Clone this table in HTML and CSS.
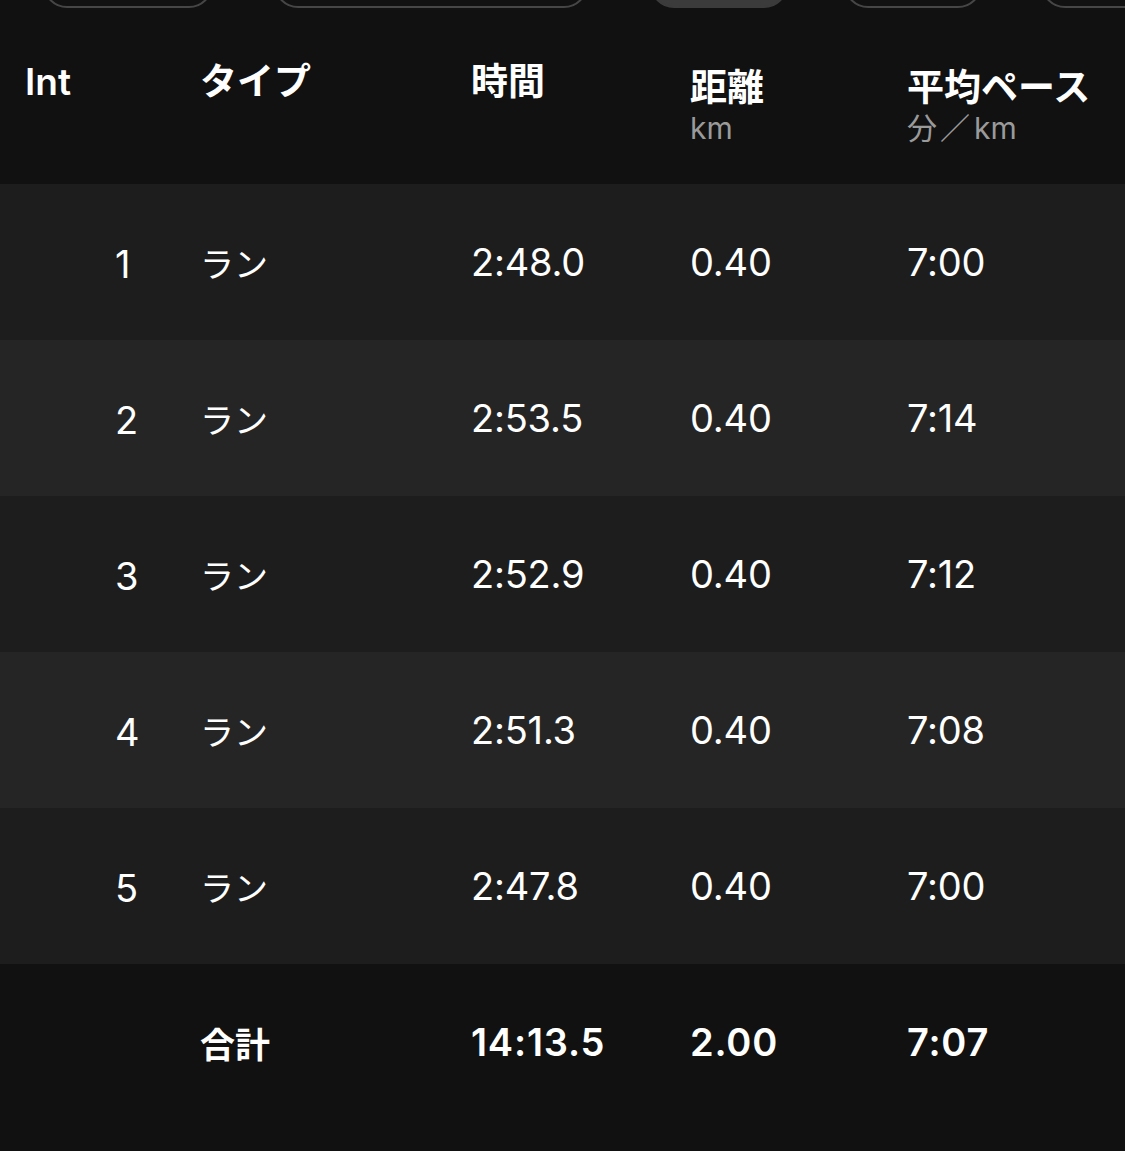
FILE: index.html
```html
<!DOCTYPE html>
<html lang="ja">
<head>
<meta charset="utf-8">
<title>Intervals</title>
<link rel="stylesheet" href="styles.css">
</head>
<body>
<div class="page">
  <div class="pills">
    <div class="pill pill-a"></div>
    <div class="pill pill-b"></div>
    <div class="pill pill-c active"></div>
    <div class="pill pill-d"></div>
    <div class="pill pill-e"></div>
  </div>

  <div class="row head">
    <div class="cell">Int</div>
    <div class="cell">タイプ</div>
    <div class="cell">時間</div>
    <div class="cell two">距離<span class="unit">km</span></div>
    <div class="cell two">平均ペース<span class="unit">分<span class="slash">／</span>km</span></div>
  </div>

  <div class="row data odd">
    <div class="cell num">1</div><div class="cell ja">ラン</div><div class="cell">2:48.0</div><div class="cell">0.40</div><div class="cell">7:00</div>
  </div>
  <div class="row data even">
    <div class="cell num">2</div><div class="cell ja">ラン</div><div class="cell">2:53.5</div><div class="cell">0.40</div><div class="cell">7:14</div>
  </div>
  <div class="row data odd">
    <div class="cell num">3</div><div class="cell ja">ラン</div><div class="cell">2:52.9</div><div class="cell">0.40</div><div class="cell">7:12</div>
  </div>
  <div class="row data even">
    <div class="cell num">4</div><div class="cell ja">ラン</div><div class="cell">2:51.3</div><div class="cell">0.40</div><div class="cell">7:08</div>
  </div>
  <div class="row data odd">
    <div class="cell num">5</div><div class="cell ja">ラン</div><div class="cell">2:47.8</div><div class="cell">0.40</div><div class="cell">7:00</div>
  </div>

  <div class="row data total">
    <div class="cell num"></div><div class="cell ja">合計</div><div class="cell">14:13.5</div><div class="cell">2.00</div><div class="cell">7:07</div>
  </div>
</div>
</body>
</html>
```

FILE: styles.css
```css
html, body {
  margin: 0;
  padding: 0;
  background: #111111;
}
body {
  width: 1125px;
  height: 1151px;
  overflow: hidden;
  font-family: Inter, "Noto Sans CJK JP", sans-serif;
  color: #ffffff;
}
.page {
  width: 1125px;
  overflow: hidden;
}
.pills {
  display: flex;
  height: 48px;
  margin-top: -40px;
  padding-left: 43px;
  overflow: hidden;
}
.pill {
  flex: 0 0 auto;
  height: 48px;
  box-sizing: border-box;
  border: 2.5px solid #464646;
  border-radius: 24px;
}
.pill-a { width: 170px; }
.pill-b { width: 314px; margin-left: 61px; }
.pill-c { width: 138px; margin-left: 62px; }
.pill-d { width: 138px; margin-left: 56px; }
.pill-e { width: 138px; margin-left: 59px; }
.pill.active {
  background: #3b3b3b;
  border-color: #3b3b3b;
}

.row {
  display: grid;
  grid-template-columns: 175px 271px 219px 217px 1fr;
  padding-left: 25px;
}
.head {
  box-sizing: border-box;
  height: 176px;
  padding-top: 52px;
  align-items: start;
  font-size: 37px;
  font-weight: 600;
  line-height: 44px;
}
.head .two {
  margin-top: 6px;
  display: flex;
  flex-direction: column;
}
.unit {
  font-size: 30px;
  line-height: 36px;
  font-weight: 400;
  color: #9a9a9a;
}
.slash {
  margin: 0 4px 0 3px;
}

.data {
  height: 156px;
  align-items: center;
  font-size: 38px;
  letter-spacing: -0.2px;
  font-weight: 400;
}
.data .ja {
  font-size: 34px;
  letter-spacing: 0;
}
.data .num {
  padding-left: 90px;
  padding-top: 4px;
}
.odd { background: #1d1d1d; }
.even { background: #252525; }
.total {
  background: #111111;
  font-weight: 600;
  letter-spacing: 0.8px;
}
.total .ja {
  font-size: 35px;
}
```
